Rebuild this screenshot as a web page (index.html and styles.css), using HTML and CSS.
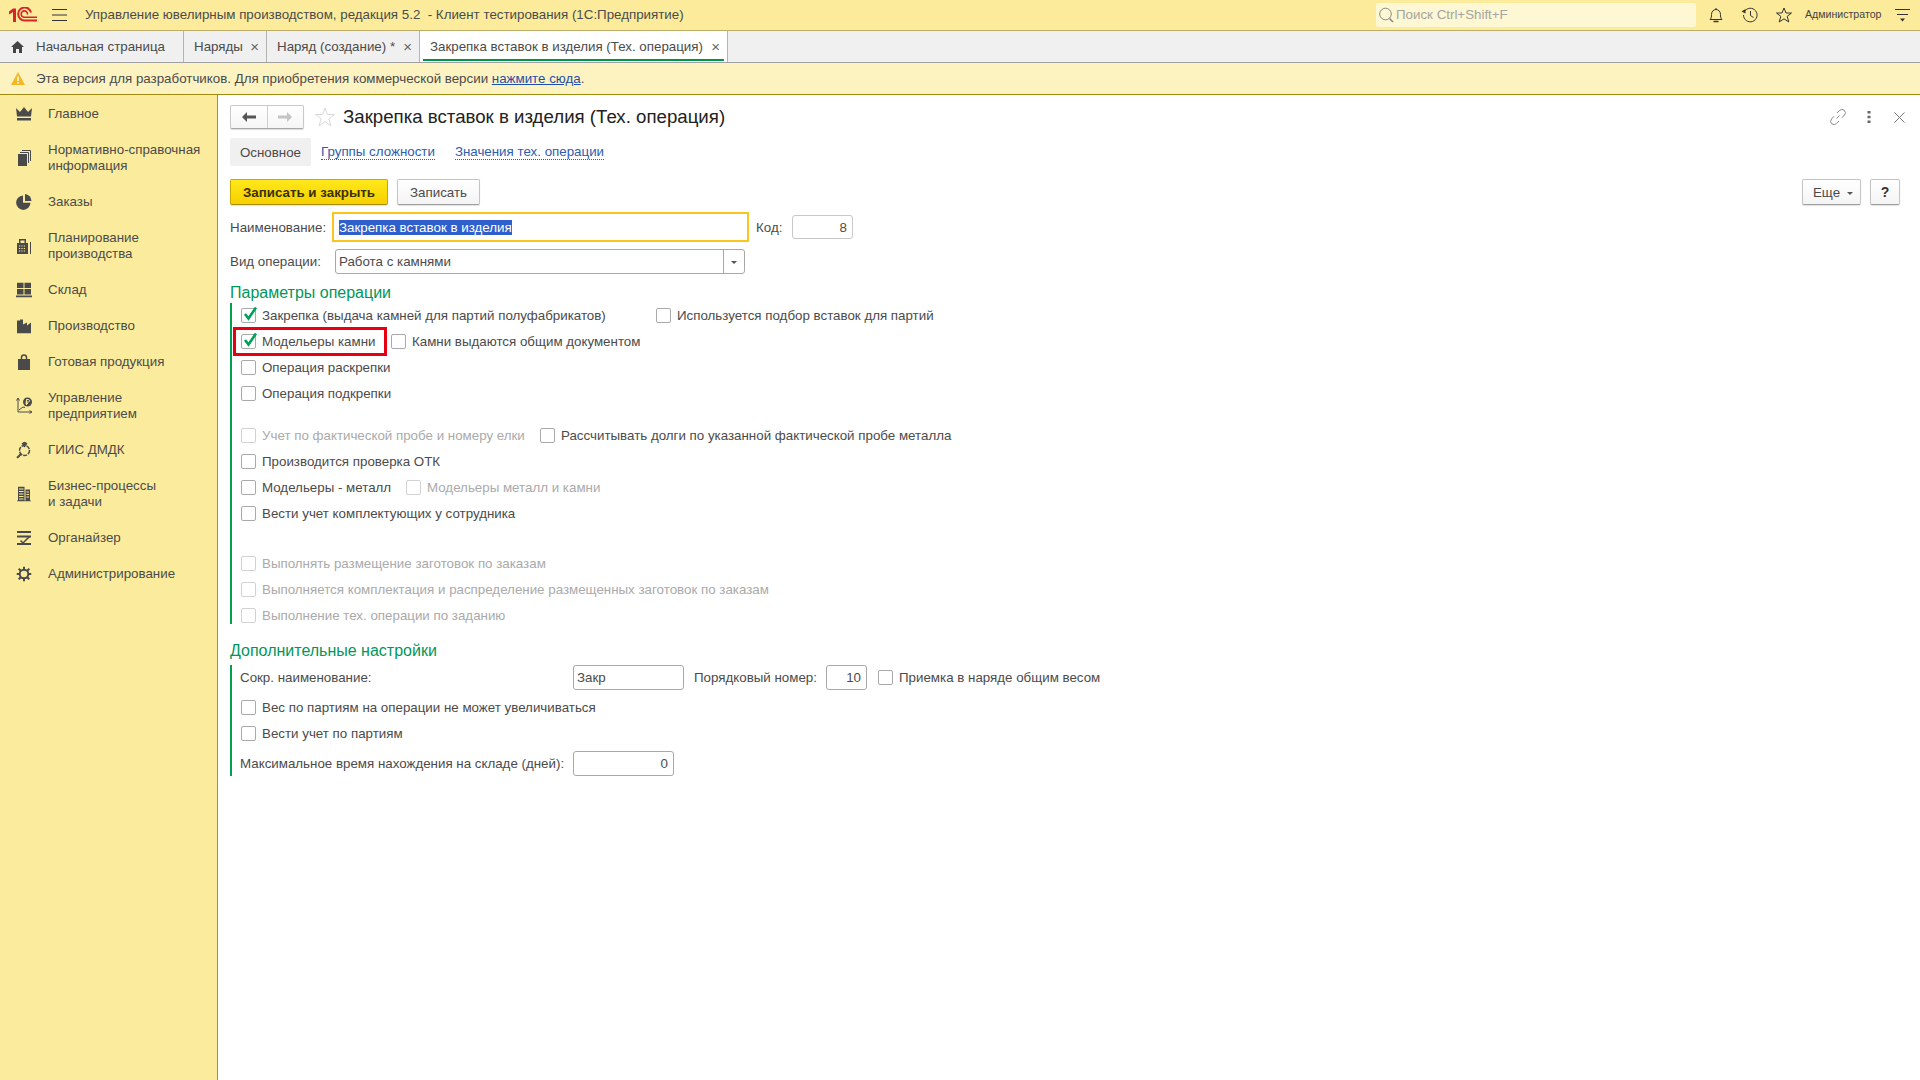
FILE: index.html
```html
<!DOCTYPE html>
<html lang="ru">
<head>
<meta charset="utf-8">
<title>Закрепка вставок в изделия</title>
<link rel="stylesheet" href="styles.css">
</head>
<body>
<div class="app">
  <header class="topbar">
    <svg class="logo" width="30" height="16" viewBox="0 0 30 16"><path d="M1 4.500 5 1.500H8V15H5V5L1 7.500Z" fill="#d8232a"/><path d="M23 5.500A6.500 6.500 0 1 0 16.500 13.500H29" fill="none" stroke="#d8232a" stroke-width="2"/><path d="M19.500 7.500A3.200 3.200 0 1 0 16.500 10.300H29" fill="none" stroke="#d8232a" stroke-width="1.600"/></svg>
    <svg class="burger" width="15" height="12" viewBox="0 0 15 12"><path d="M0 .5H15M0 6H15M0 11.500H15" stroke="#333" stroke-width="1"/></svg>
    <div class="app-title">Управление ювелирным производством, редакция 5.2&nbsp; - Клиент тестирования (1С:Предприятие)</div>
    <div class="search">
      <svg width="16" height="18" viewBox="0 0 16 18"><circle cx="7.500" cy="8" r="5.800" fill="none" stroke="#8a8a80" stroke-width="1"/><path d="M11.500 12.500 15 16" stroke="#8a8a80" stroke-width="1.600"/></svg>
      <span class="search-text">Поиск Ctrl+Shift+F</span>
    </div>
    <svg class="ti ti-bell" width="14" height="16" viewBox="0 0 14 16"><path d="M1 12.500C2.500 11 2.500 9.500 2.500 7.500 2.500 4.500 4.500 2.500 7 2.500S11.500 4.500 11.500 7.500C11.500 9.500 11.500 11 13 12.500ZM7 1V2.500" fill="none" stroke="#333"/><path d="M4.500 14.500H9.500" stroke="#333" stroke-width="1.500"/></svg>
    <svg class="ti ti-hist" width="17" height="16" viewBox="0 0 17 16"><path d="M3.500 4.500A6.800 6.800 0 1 1 2.500 8" fill="none" stroke="#333"/><path d="M0.500 4.500 4.500 2V6.500Z" fill="#333"/><path d="M9.500 4V8.500L12.500 10.500" fill="none" stroke="#333"/></svg>
    <svg class="ti ti-star" width="16" height="16" viewBox="0 0 16 16"><path d="M8 1 10 6H15.500L11.200 9.400 12.800 15 8 11.800 3.200 15 4.800 9.400 .5 6H6Z" fill="none" stroke="#333"/></svg>
    <div class="user">Администратор</div>
    <svg class="ti-menu" width="15" height="14" viewBox="0 0 15 14"><path d="M0 1.500H15M2 6.500H13" stroke="#333"/><path d="M5 10.500H10L7.500 13.500Z" fill="#333"/></svg>
  </header>

  <nav class="tabbar">
    <div class="tab tab-home">
      <svg width="13" height="12" viewBox="0 0 13 12"><path d="M6.500 0 13 6H11V12H8V8H5V12H2V6H0Z" fill="#444"/></svg>
      <span>Начальная страница</span>
    </div>
    <div class="tab tab-orders"><span>Наряды</span><i class="close">×</i></div>
    <div class="tab tab-new"><span>Наряд (создание) *</span><i class="close">×</i></div>
    <div class="tab tab-active"><span>Закрепка вставок в изделия (Тех. операция)</span><i class="close">×</i></div>
  </nav>

  <div class="notice">
    <svg width="14" height="13" viewBox="0 0 14 13"><path d="M7 0 14 13H0Z" fill="#f5b81f"/><path d="M7 4.500V9M7 10V11.500" stroke="#fff" stroke-width="1.500"/></svg>
    <span>Эта версия для разработчиков. Для приобретения коммерческой версии <a>нажмите сюда</a>.</span>
  </div>

  <div class="main">
    <aside class="sidebar">
      <div class="side-item"><svg width="18" height="14" viewBox="0 0 18 14"><path d="M1 1 5 5 9 0 13 5 17 1 16 9.500H2ZM2 11H16V13.500H2Z" fill="#4a4a4a"/></svg><span>Главное</span></div>
      <div class="side-item two"><svg width="18" height="16" viewBox="0 0 18 16"><path d="M3 4H12V16H3Z" fill="#4a4a4a"/><path d="M5 2.500H13.500V13M7 .5H15.500V11" fill="none" stroke="#4a4a4a"/></svg><span>Нормативно-справочная<br>информация</span></div>
      <div class="side-item"><svg width="16" height="16" viewBox="0 0 16 16"><path d="M7 1.500V8.800H14.500A7.200 7.200 0 1 1 7 1.500Z" fill="#4a4a4a"/><path d="M9 0A7 7 0 0 1 15.500 7H9Z" fill="#4a4a4a"/></svg><span>Заказы</span></div>
      <div class="side-item two"><svg width="16" height="16" viewBox="0 0 16 16"><path d="M3 1H10V5H12V16H1V5H3ZM4.500 2.500V5H8.500V2.500ZM14 4H15V16H14Z" fill="#4a4a4a" fill-rule="evenodd"/><path d="M3 8H10M3 10.500H10M3 13H10" stroke="#fbec9d" stroke-dasharray="1.200 1.200"/></svg><span>Планирование<br>производства</span></div>
      <div class="side-item"><svg width="18" height="15" viewBox="0 0 18 15"><path d="M2 0H8.500V5.500H2ZM9.500 0H16V5.500H9.500ZM2 6.500H8.500V12H2ZM9.500 6.500H16V12H9.500ZM1 13H17V15H1Z" fill="#4a4a4a"/></svg><span>Склад</span></div>
      <div class="side-item"><svg width="16" height="15" viewBox="0 0 16 15"><path d="M1 2H4V1H7V6L11 4V7L15 4V15H1Z" fill="#4a4a4a"/></svg><span>Производство</span></div>
      <div class="side-item"><svg width="14" height="16" viewBox="0 0 14 16"><path d="M1 5H13V16H1Z" fill="#4a4a4a"/><path d="M4.500 8V3.500A2.500 2.500 0 0 1 9.500 3.500V8" fill="none" stroke="#4a4a4a" stroke-width="1.500"/></svg><span>Готовая продукция</span></div>
      <div class="side-item two"><svg width="18" height="18" viewBox="0 0 18 18"><path d="M3 1V15H16.500M1.500 3.500 3 1 4.500 3.500M14.500 13.500 17 15 14.500 16.500M4 13 8 10 10 10.500" fill="none" stroke="#4a4a4a"/><circle cx="12.500" cy="5" r="4.500" fill="#4a4a4a"/><path d="M11.500 8V2.500H13.500A1.300 1.300 0 0 1 13.500 5H10.500M10.500 6.500H13" fill="none" stroke="#fbec9d"/></svg><span>Управление<br>предприятием</span></div>
      <div class="side-item"><svg width="16" height="17" viewBox="0 0 16 17"><circle cx="8.500" cy="9" r="5" fill="none" stroke="#4a4a4a" stroke-width="1.500" stroke-dasharray="4 1"/><path d="M5.500 2 8.500 0 11.500 2 8.500 6Z" fill="#4a4a4a"/><path d="M5 12.500 1 16.500" stroke="#4a4a4a" stroke-width="2"/></svg><span>ГИИС ДМДК</span></div>
      <div class="side-item two"><svg width="14" height="15" viewBox="0 0 14 15"><path d="M1 0H7.500V14H1ZM8.500 3H13V14H8.500ZM0 14H14V15H0Z" fill="#4a4a4a"/><path d="M2 2.500H6.500M2 5H6.500M2 7.500H6.500M2 10H6.500M2 12.500H6.500M9.500 5.500H12M9.500 8H12M9.500 10.500H12" stroke="#fbec9d"/></svg><span>Бизнес-процессы<br>и задачи</span></div>
      <div class="side-item"><svg width="15" height="14" viewBox="0 0 15 14"><path d="M.5 1H14.500M.5 5.500H14.500M.5 13H14.500" stroke="#4a4a4a" stroke-width="2"/><path d="M4 9.500 6.500 12 13 5.500" fill="none" stroke="#4a4a4a" stroke-width="1.500"/></svg><span>Органайзер</span></div>
      <div class="side-item"><svg width="15" height="15" viewBox="0 0 15 15"><circle cx="7.500" cy="7.500" r="4.300" fill="none" stroke="#4a4a4a" stroke-width="2"/><path d="M7.500 0V3M7.500 12V15M0 7.500H3M12 7.500H15M2.200 2.200 4.300 4.300M10.700 10.700 12.800 12.800M12.800 2.200 10.700 4.300M4.300 10.700 2.200 12.800" stroke="#4a4a4a" stroke-width="2"/></svg><span>Администрирование</span></div>
    </aside>

    <section class="form">
      <div class="form-head">
        <div class="nav-btns">
          <div class="nav-btn"><svg width="14" height="10" viewBox="0 0 14 10"><path d="M0 5 5 0V3.500H14V6.500H5V10Z" fill="#555"/></svg></div>
          <div class="nav-btn"><svg width="14" height="10" viewBox="0 0 14 10"><path d="M14 5 9 0V3.500H0V6.500H9V10Z" fill="#c4c4c4"/></svg></div>
        </div>
        <svg class="fav" width="20" height="20" viewBox="0 0 20 20"><path d="M10 1 12.400 7.500H19.500L13.800 11.800 16 18.800 10 14.600 4 18.800 6.200 11.800 .5 7.500H7.600Z" fill="#fff" stroke="#d9d9d9"/></svg>
        <h1>Закрепка вставок в изделия (Тех. операция)</h1>
        <div class="head-tools">
          <svg width="16" height="16" viewBox="0 0 16 16"><path d="M6.500 9.500 9.500 6.500M7 4 9.500 1.500A3 3 0 0 1 14.500 6L12 8.800M9 12 6.500 14.500A3 3 0 0 1 1.500 10L4 7.200" fill="none" stroke="#888"/></svg>
          <svg class="kebab" width="4" height="12" viewBox="0 0 4 12"><path d="M.5 0H3.500V2.500H.5ZM.5 4.700H3.500V7.300H.5ZM.5 9.500H3.500V12H.5Z" fill="#666"/></svg>
          <svg width="11" height="11" viewBox="0 0 11 11"><path d="M.5 .5 10.500 10.500M10.500 .5 .5 10.500" stroke="#777"/></svg>
        </div>
      </div>

      <div class="form-tabs">
        <div class="ftab-active">Основное</div>
        <a class="ftab ftab-a">Группы сложности</a>
        <a class="ftab ftab-b">Значения тех. операции</a>
      </div>

      <div class="cmdbar">
        <div class="btn btn-primary">Записать и закрыть</div>
        <div class="btn btn-save">Записать</div>
        <div class="cmd-right">
          <div class="btn btn-more">Еще<i class="caret"></i></div>
          <div class="btn btn-help">?</div>
        </div>
      </div>

      <div class="name-row">
        <label class="lbl-name">Наименование:</label>
        <div class="name-input"><span class="sel">Закрепка вставок в изделия</span></div>
        <label class="lbl-code">Код:</label>
        <div class="field code-input">8</div>
      </div>

      <div class="type-row">
        <label class="lbl-type">Вид операции:</label>
        <div class="field type-input"><span>Работа с камнями</span><div class="dd"><i class="caret"></i></div></div>
      </div>

      <h2 class="sec sec-first">Параметры операции</h2>
      <div class="group group-a">
        <div class="row"><div class="chk w-415"><i class="box on"><svg width="15" height="15" viewBox="0 0 15 15"><path d="M3 7 6.500 11.500 14 .5" fill="none" stroke="#00a05a" stroke-width="2.600"/></svg></i>Закрепка (выдача камней для партий полуфабрикатов)</div><div class="chk"><i class="box"></i>Используется подбор вставок для партий</div></div>
        <div class="row"><div class="chk w-150 marked"><i class="box on"><svg width="15" height="15" viewBox="0 0 15 15"><path d="M3 7 6.500 11.500 14 .5" fill="none" stroke="#00a05a" stroke-width="2.600"/></svg></i>Модельеры камни</div><div class="chk"><i class="box"></i>Камни выдаются общим документом</div></div>
        <div class="row"><div class="chk"><i class="box"></i>Операция раскрепки</div></div>
        <div class="row"><div class="chk"><i class="box"></i>Операция подкрепки</div></div>
        <div class="row row-gap-s"><div class="chk w-299 off"><i class="box"></i>Учет по фактической пробе и номеру елки</div><div class="chk"><i class="box"></i>Рассчитывать долги по указанной фактической пробе металла</div></div>
        <div class="row"><div class="chk"><i class="box"></i>Производится проверка ОТК</div></div>
        <div class="row"><div class="chk w-165"><i class="box"></i>Модельеры - металл</div><div class="chk off"><i class="box"></i>Модельеры металл и камни</div></div>
        <div class="row"><div class="chk"><i class="box"></i>Вести учет комплектующих у сотрудника</div></div>
        <div class="row row-gap-l"><div class="chk off"><i class="box"></i>Выполнять размещение заготовок по заказам</div></div>
        <div class="row"><div class="chk off"><i class="box"></i>Выполняется комплектация и распределение размещенных заготовок по заказам</div></div>
        <div class="row"><div class="chk off"><i class="box"></i>Выполнение тех. операции по заданию</div></div>
      </div>

      <h2 class="sec sec-second">Дополнительные настройки</h2>
      <div class="group group-b">
        <div class="row-field">
          <label class="lbl-short">Сокр. наименование:</label>
          <div class="field short-input">Закр</div>
          <label class="lbl-order">Порядковый номер:</label>
          <div class="field order-input">10</div>
          <div class="chk chk-order"><i class="box"></i>Приемка в наряде общим весом</div>
        </div>
        <div class="row"><div class="chk"><i class="box"></i>Вес по партиям на операции не может увеличиваться</div></div>
        <div class="row"><div class="chk"><i class="box"></i>Вести учет по партиям</div></div>
        <div class="row-field row-last">
          <label class="lbl-max">Максимальное время нахождения на складе (дней):</label>
          <div class="field max-input">0</div>
        </div>
      </div>
    </section>
  </div>
</div>
</body>
</html>
```

FILE: styles.css
```css
* { box-sizing: border-box; }
html, body { margin: 0; height: 100%; }
body { font: 13.33px/17px "Liberation Sans", Arial, sans-serif; color: #4b4b4b; background: #fff; overflow: hidden; }
i { font-style: normal; }
svg { display: block; flex: none; }
.app { height: 1080px; display: flex; flex-direction: column; }

.topbar { height: 31px; flex: none; display: flex; align-items: center; background: #fbeb9b; border-bottom: 1px solid #bcae68; }
.logo { margin-left: 8px; }
.burger { margin-left: 14px; }
.app-title { margin-left: 18px; width: 1291px; color: #4b4b4b; white-space: nowrap; padding-bottom: 2px; }
.search { width: 320px; height: 24px; background: #fdf7d4; border-radius: 2px; display: flex; align-items: center; padding-left: 2px; color: #a5a5a0; gap: 2px; }
.search-text { padding-bottom: 2px; }
.ti-bell { margin-left: 13px; }
.ti-hist { margin-left: 18px; }
.ti-star { margin-left: 18px; }
.user { margin-left: 13px; font-size: 10.6px; width: 90px; color: #444; white-space: nowrap; padding-bottom: 2px; }
.ti-menu { margin-left: 0; }

.tabbar { height: 32px; flex: none; display: flex; background: #f0f0f0; border-bottom: 1px solid #a0a0a0; }
.tab { display: flex; align-items: center; height: 31px; border-right: 1px solid #b4b4b4; white-space: nowrap; color: #4b4b4b; position: relative; }
.tab-home { width: 184px; padding-left: 11px; gap: 12px; }
.tab-orders { width: 83px; padding-left: 10px; }
.tab-new { width: 153px; padding-left: 10px; }
.tab-active { width: 308px; padding-left: 10px; background: #fff; }
.tab-active::after { content: ""; position: absolute; left: 3px; right: 3px; bottom: 1px; height: 2px; background: #009646; }
.close { margin-left: auto; margin-right: 7px; font-size: 15px; color: #666; }

.notice { height: 32px; flex: none; display: flex; align-items: center; gap: 11px; padding-left: 11px; background: #fdf3c0; border-bottom: 1px solid #a08a10; }
.notice a { color: #1c4fae; text-decoration: underline; }

.main { flex: 1; display: flex; min-height: 0; }
.sidebar { width: 218px; flex: none; background: #fbec9d; border-right: 1px solid #8f8f80; }
.side-item { height: 36px; display: flex; align-items: center; color: #4b4b4b; position: relative; padding-left: 48px; }
.side-item.two { height: 52px; line-height: 16px; }
.side-item.two span { padding-top: 2px; }
.side-item svg { position: absolute; left: 24px; top: calc(50% + 1px); transform: translate(-50%, -50%); }

.form { flex: 1; padding: 10px 20px 0 12px; min-width: 0; position: relative; }
.form-head { height: 24px; display: flex; align-items: center; }
.nav-btns { width: 74px; height: 24px; display: flex; border: 1px solid #c9c9c9; border-bottom-color: #a8a8a8; border-radius: 2px; background: linear-gradient(#fff, #f5f5f5); box-shadow: 0 1px 1px rgba(0,0,0,.15); }
.nav-btn { flex: 1; display: flex; align-items: center; justify-content: center; }
.nav-btn + .nav-btn { border-left: 1px solid #cfcfcf; }
.fav { margin-left: 11px; }
h1 { margin: 0 0 0 8px; font-weight: 400; font-size: 18.67px; line-height: 24px; color: #222; white-space: nowrap; }
.head-tools { margin-left: auto; margin-right: -5px; display: flex; align-items: center; gap: 22px; }
.kebab { margin: 0 1px 0 -1px; }

.form-tabs { height: 28px; margin-top: 9px; display: flex; align-items: center; }
.ftab-active { width: 81px; height: 28px; background: #f0f0f0; border-radius: 2px; display: flex; align-items: center; justify-content: center; }
.ftab { color: #2d5cb0; border-bottom: 1px dotted #2d5cb0; line-height: 15px; white-space: nowrap; }
.ftab-a { margin-left: 10px; }
.ftab-b { margin-left: 20px; }

.cmdbar { height: 26px; margin-top: 13px; display: flex; }
.btn { height: 26px; display: flex; align-items: center; justify-content: center; border: 1px solid #c4c4c4; border-bottom-color: #9f9f9f; border-radius: 2px; background: linear-gradient(#fff, #f4f4f4); box-shadow: 0 1px 1px rgba(0,0,0,.12); white-space: nowrap; color: #4b4b4b; }
.btn-primary { width: 158px; background: linear-gradient(#ffe81a, #f7d000); border-color: #c6a800; border-bottom-color: #a58c00; color: #3a3000; font-weight: 700; }
.btn-save { width: 83px; margin-left: 9px; }
.cmd-right { margin-left: auto; display: flex; gap: 9px; }
.btn-more { width: 59px; gap: 7px; padding-left: 3px; }
.btn-help { width: 30px; font-weight: 700; color: #333; font-size: 14px; }
.caret { width: 0; height: 0; border-left: 3px solid transparent; border-right: 3px solid transparent; border-top: 3px solid #555; display: block; margin-top: 2px; }

.field { border: 1px solid #c8c8c8; border-radius: 3px; background: #fff; height: 25px; display: flex; align-items: center; padding: 0 5px; color: #4b4b4b; }
.name-row { height: 30px; margin-top: 7px; display: flex; align-items: center; }
.lbl-name { width: 102px; }
.name-input { width: 417px; height: 30px; border: 2px solid #fcc51e; padding-left: 5px; display: flex; align-items: center; color: #fff; white-space: nowrap; }
.sel { background: #2f5fcc; line-height: 15px; color: #fff; }
.lbl-code { margin-left: 7px; width: 36px; }
.code-input { width: 61px; justify-content: flex-end; height: 24px; }
.type-row { height: 25px; margin-top: 7px; display: flex; align-items: center; }
.lbl-type { width: 105px; }
.type-input { width: 410px; border-color: #a8a8a8; padding-right: 0; padding-left: 3px; justify-content: space-between; }
.dd { width: 21px; height: 23px; border-left: 1px solid #a8a8a8; display: flex; align-items: center; justify-content: center; }

.sec { margin: 0; font-weight: 400; font-size: 16px; line-height: 20px; color: #00975a; white-space: nowrap; }
.sec-first { margin-top: 9px; }
.sec-second { margin-top: 17px; }
.group { border-left: 2px solid #00a050; display: flex; flex-direction: column; }
.group-a { padding-left: 9px; padding-top: 3px; gap: 8px; }
.group-b { margin-top: 4px; padding-left: 8px; }
.row { height: 18px; display: flex; align-items: center; }
.row-gap-s { margin-top: 16px; }
.row-gap-l { margin-top: 24px; }
.chk { display: flex; align-items: center; gap: 6px; white-space: nowrap; flex: none; position: relative; }
.box { width: 15px; height: 15px; border: 1px solid #a9a9a9; border-radius: 2px; background: #fff; flex: none; display: block; position: relative; }
.box svg { position: absolute; left: 0; top: -2px; overflow: visible; }
.off { color: #aaa; }
.off .box { border-color: #d2d2d2; }
.w-415 { width: 415px; }
.w-150 { width: 150px; }
.w-299 { width: 299px; }
.w-165 { width: 165px; }
.marked::before { content: ""; position: absolute; left: -8px; right: 4px; top: -6px; bottom: -6px; border: 3px solid #e60012; }

.row-field { height: 25px; display: flex; align-items: center; white-space: nowrap; }
.lbl-short { width: 333px; }
.short-input { width: 111px; border-color: #a8a8a8; padding-left: 3px; }
.lbl-order { margin-left: 10px; width: 132px; }
.order-input { width: 41px; justify-content: flex-end; border-color: #a8a8a8; }
.chk-order { margin-left: 11px; }
.group-b .row { margin-top: 8px; padding-left: 1px; }
.row-last { margin-top: 9px; }
.lbl-max { width: 333px; }
.max-input { width: 101px; justify-content: flex-end; border-color: #a8a8a8; }
```
